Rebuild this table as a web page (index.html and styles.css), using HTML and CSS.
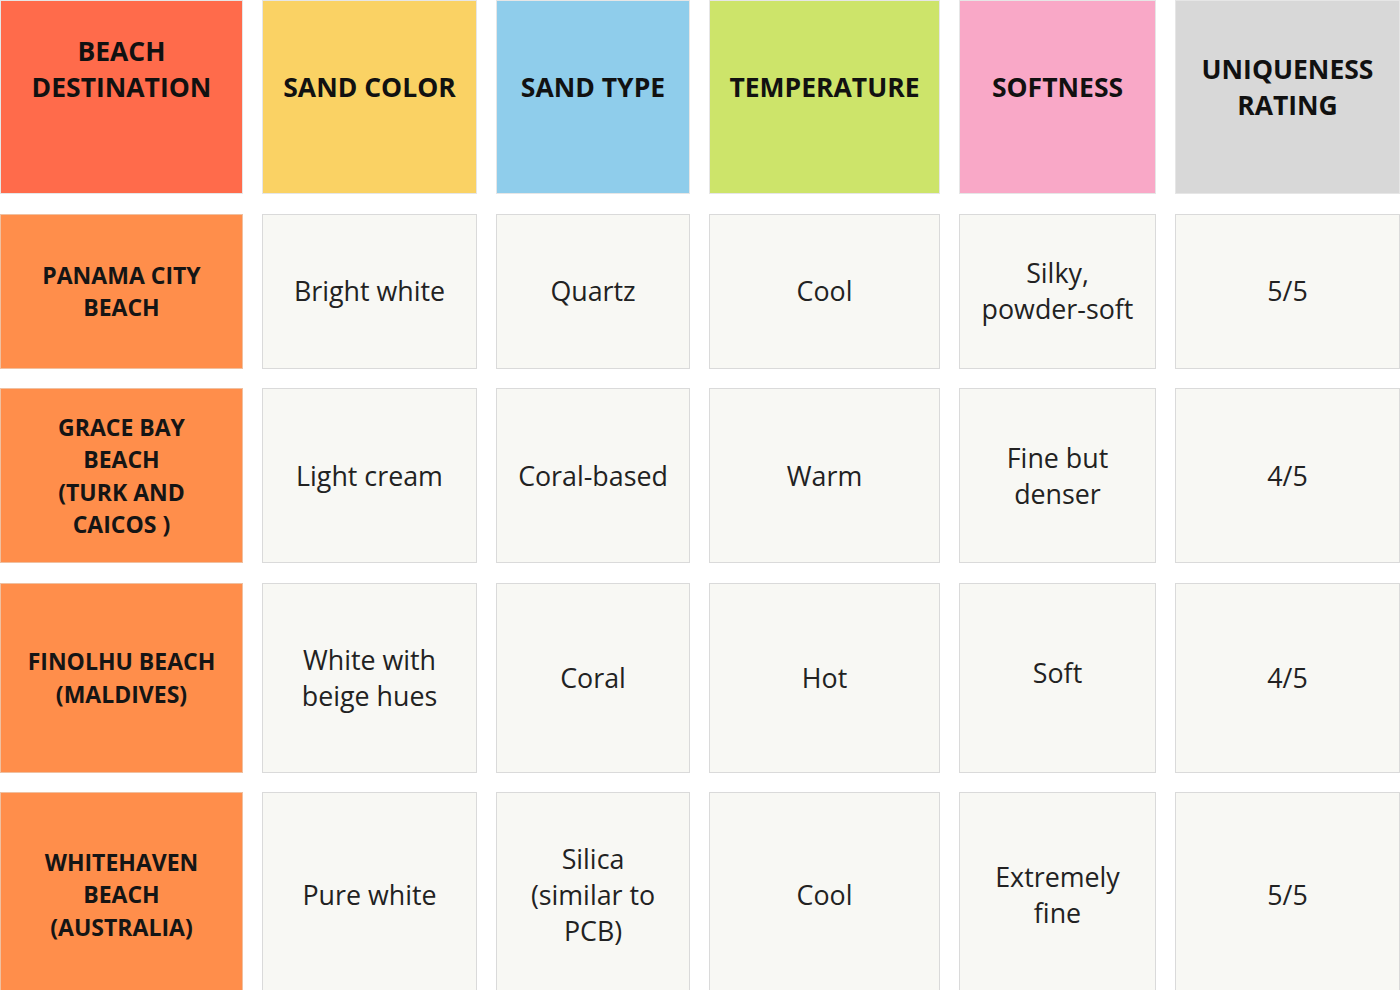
FILE: index.html
```html
<!DOCTYPE html>
<html lang="en">
<head>
<meta charset="utf-8">
<title>Beach Sand Comparison</title>
<link rel="stylesheet" href="styles.css">
</head>
<body>
<div class="table">
  <div class="cell head h-dest"><span class="dest-text">BEACH<br>DESTINATION</span></div>
  <div class="cell head h-color">SAND COLOR</div>
  <div class="cell head h-type">SAND TYPE</div>
  <div class="cell head h-temp">TEMPERATURE</div>
  <div class="cell head h-soft">SOFTNESS</div>
  <div class="cell head h-uniq">UNIQUENESS<br>RATING</div>

  <div class="cell name">PANAMA CITY<br>BEACH</div>
  <div class="cell data">Bright white</div>
  <div class="cell data">Quartz</div>
  <div class="cell data">Cool</div>
  <div class="cell data">Silky,<br>powder-soft</div>
  <div class="cell data">5/5</div>

  <div class="cell name">GRACE BAY<br>BEACH<br>(TURK AND<br>CAICOS )</div>
  <div class="cell data">Light cream</div>
  <div class="cell data">Coral-based</div>
  <div class="cell data">Warm</div>
  <div class="cell data">Fine but<br>denser</div>
  <div class="cell data">4/5</div>

  <div class="cell name">FINOLHU BEACH<br>(MALDIVES)</div>
  <div class="cell data">White with<br>beige hues</div>
  <div class="cell data">Coral</div>
  <div class="cell data">Hot</div>
  <div class="cell data raised">Soft</div>
  <div class="cell data">4/5</div>

  <div class="cell name">WHITEHAVEN<br>BEACH<br>(AUSTRALIA)</div>
  <div class="cell data">Pure white</div>
  <div class="cell data">Silica<br>(similar to<br>PCB)</div>
  <div class="cell data">Cool</div>
  <div class="cell data">Extremely<br>fine</div>
  <div class="cell data">5/5</div>
</div>
</body>
</html>
```

FILE: styles.css
```css
html, body {
  margin: 0;
  padding: 0;
  background: #ffffff;
}

body {
  width: 1400px;
  height: 990px;
  overflow: hidden;
  font-family: "Open Sans", "Noto Sans", sans-serif;
}

.table {
  display: grid;
  grid-template-columns: 243px 215px 194px 231px 197px 225px;
  grid-template-rows: 194px 155px 175px 190px 205px;
  column-gap: 19px;
  row-gap: 19.5px;
}

.cell {
  box-sizing: border-box;
  display: flex;
  align-items: center;
  justify-content: center;
  text-align: center;
  border: 1px solid #dadada;
}

.head {
  font-weight: 700;
  font-size: 26.5px;
  line-height: 36px;
  color: #111111;
  padding-bottom: 20px;
  border-color: #e6e6e6;
}

.h-dest { background: #ff6b4b; padding-bottom: 56px; }
.h-color { background: #fad264; }
.h-type { background: #8fcdeb; }
.h-temp { background: #cde46a; }
.h-soft { background: #f9a8c7; }
.h-uniq { background: #d8d8d8; }

.name {
  background: #ff8e4b;
  border-color: #f0c0a0;
  font-weight: 700;
  font-size: 23px;
  line-height: 32.5px;
  color: #151515;
}

.data {
  background: #f8f8f4;
  font-size: 26.8px;
  line-height: 36px;
  color: #222222;
}

.data.raised {
  padding-bottom: 10px;
}
```
